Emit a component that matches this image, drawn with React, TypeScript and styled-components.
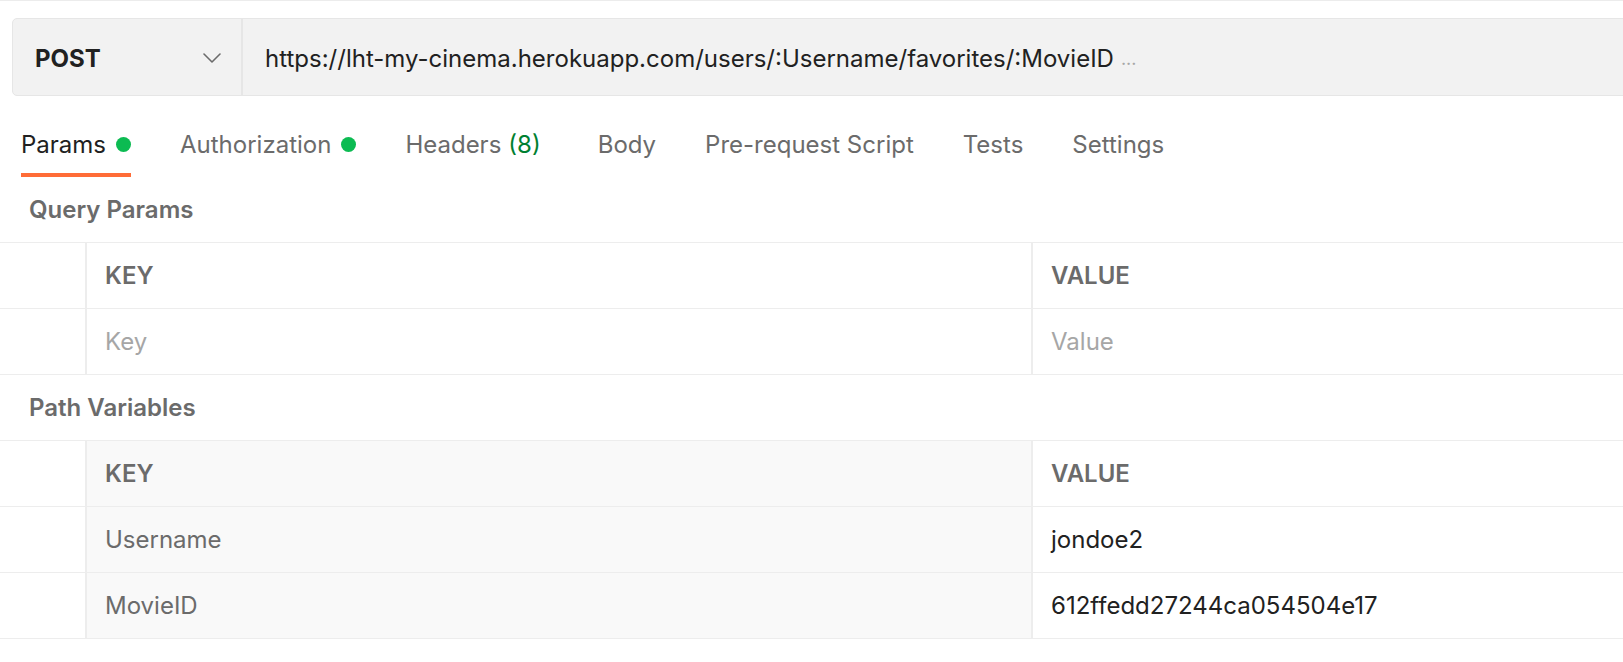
import React from "react";
import styled, { createGlobalStyle } from "styled-components";

const Global = createGlobalStyle`
  html, body { margin: 0; padding: 0; background: #ffffff; }
  body { font-family: Inter, "Noto Sans", "Liberation Sans", sans-serif; overflow: hidden; }
  * { box-sizing: border-box; }
`;

const Page = styled.div`
  width: 1623px;
  height: 662px;
  overflow: hidden;
  border-top: 1px solid #ececec;
  display: flex;
  flex-direction: column;
`;

const RequestBar = styled.div`
  margin: 17px -20px 0 12px;
  height: 78px;
  display: flex;
  background: #f2f2f2;
  border: 1px solid #e6e6e6;
  border-radius: 5px;
`;

const Method = styled.div`
  width: 230px;
  flex: none;
  display: flex;
  align-items: center;
  justify-content: space-between;
  padding: 2px 20px 0 22px;
  border-right: 2px solid #e6e6e6;
  font-weight: 700;
  font-size: 24px;
  color: #212121;
`;

const Url = styled.div`
  flex: 1;
  display: flex;
  align-items: center;
  padding: 2px 0 0 22px;
  font-size: 24px;
  color: #212121;
  white-space: nowrap;
`;

const Ellipsis = styled.span`
  color: #a6a6a6;
  margin-left: 7px;
  font-size: 18px;
`;

const Tabs = styled.div`
  height: 81px;
  display: flex;
  align-items: flex-end;
  padding-left: 21px;
  gap: 49px;
`;

const Tab = styled.div<{ $active?: boolean; $extra?: number }>`
  height: 64px;
  display: flex;
  align-items: center;
  padding-top: 3px;
  margin-right: ${(p) => p.$extra ?? 0}px;
  border-bottom: 4px solid ${(p) => (p.$active ? "#ff6c37" : "transparent")};
  font-size: 24px;
  color: ${(p) => (p.$active ? "#212121" : "#6b6b6b")};
  white-space: nowrap;
`;

const Dot = styled.span`
  width: 15px;
  height: 15px;
  border-radius: 50%;
  background: #0cbb52;
  margin-left: 10px;
`;

const Count = styled.span`
  color: #007f31;
  margin-left: 7px;
`;

const SectionTitle = styled.div`
  height: 65px;
  display: flex;
  align-items: center;
  padding-left: 29px;
  font-size: 24px;
  font-weight: 600;
  color: #6b6b6b;
`;

const Table = styled.div`
  margin-right: -20px;
  border-top: 1px solid #ededed;
`;

const Row = styled.div`
  display: grid;
  grid-template-columns: 85px 946px 1fr;
  height: 66px;
  border-bottom: 1px solid #ededed;
`;

const Cell = styled.div<{ $shade?: boolean; $tone?: "head" | "placeholder" | "key" | "value" }>`
  display: flex;
  align-items: center;
  padding-left: 18px;
  border-left: 2px solid #ededed;
  background: ${(p) => (p.$shade ? "#f9f9f9" : "#ffffff")};
  font-size: 24px;
  font-weight: ${(p) => (p.$tone === "head" ? 600 : 400)};
  color: ${(p) =>
    p.$tone === "head"
      ? "#6b6b6b"
      : p.$tone === "placeholder"
      ? "#a6a6a6"
      : p.$tone === "key"
      ? "#6b6b6b"
      : "#212121"};
  white-space: nowrap;
`;

const CheckCell = styled.div`
  background: #ffffff;
`;

const Chevron = () => (
  <svg width="18" height="10" viewBox="0 0 18 10" fill="none">
    <path d="M1 1l8 8 8-8" stroke="#6b6b6b" strokeWidth="1.6" strokeLinecap="round" strokeLinejoin="round" />
  </svg>
);

export default function App() {
  const pathVars = [
    { key: "Username", value: "jondoe2" },
    { key: "MovieID", value: "612ffedd27244ca054504e17" },
  ];
  return (
    <>
      <Global />
      <Page>
        <RequestBar>
          <Method>
            POST
            <Chevron />
          </Method>
          <Url>
            https://lht-my-cinema.herokuapp.com/users/:Username/favorites/:MovieID
            <Ellipsis>...</Ellipsis>
          </Url>
        </RequestBar>
        <Tabs>
          <Tab $active>
            Params
            <Dot />
          </Tab>
          <Tab>
            Authorization
            <Dot />
          </Tab>
          <Tab $extra={8}>
            Headers<Count>(8)</Count>
          </Tab>
          <Tab>Body</Tab>
          <Tab>Pre-request Script</Tab>
          <Tab>Tests</Tab>
          <Tab>Settings</Tab>
        </Tabs>
        <SectionTitle>Query Params</SectionTitle>
        <Table>
          <Row>
            <CheckCell />
            <Cell $tone="head">KEY</Cell>
            <Cell $tone="head">VALUE</Cell>
          </Row>
          <Row>
            <CheckCell />
            <Cell $tone="placeholder">Key</Cell>
            <Cell $tone="placeholder">Value</Cell>
          </Row>
        </Table>
        <SectionTitle>Path Variables</SectionTitle>
        <Table>
          <Row>
            <CheckCell />
            <Cell $tone="head" $shade>KEY</Cell>
            <Cell $tone="head">VALUE</Cell>
          </Row>
          {pathVars.map((v) => (
            <Row key={v.key}>
              <CheckCell />
              <Cell $tone="key" $shade>{v.key}</Cell>
              <Cell $tone="value">{v.value}</Cell>
            </Row>
          ))}
        </Table>
      </Page>
    </>
  );
}
